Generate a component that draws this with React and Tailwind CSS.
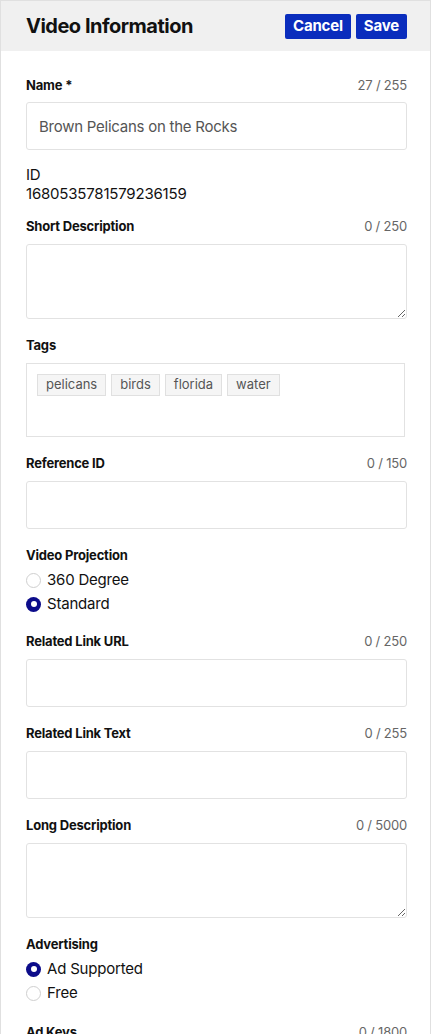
import React from 'react';

const font = { fontFamily: 'Inter, "Liberation Sans", sans-serif' };

const FieldLabel = ({ label, count }) => (
    <div className="flex items-center justify-between h-4">
        <span className="text-[13px] font-bold text-[#111] leading-4 tracking-[-0.2px]">{label}</span>
        {count && <span className="text-[13px] text-[#666] leading-4 tracking-[-0.2px]">{count}</span>}
    </div>
);

const TextField = ({ label, count, value, className = 'mt-[18px]', gap = 'mt-[10px]' }) => (
    <div className={className}>
        <FieldLabel label={label} count={count} />
        <input
            readOnly
            value={value || ''}
            className={`${gap} block w-full h-12 border border-[#e2e2e2] rounded-[3px] px-3 text-[15px] text-[#555] tracking-[-0.25px] outline-none`}
        />
    </div>
);

const TextArea = ({ label, count, className = 'mt-[18px]' }) => (
    <div className={className}>
        <FieldLabel label={label} count={count} />
        <textarea className="mt-[10px] block w-full h-[75px] border border-[#e2e2e2] rounded-[3px] px-3 outline-none" />
    </div>
);

const Radio = ({ label, checked }) => (
    <div className="flex items-center h-6">
        {checked ? (
            <span className="w-[15px] h-[15px] rounded-full bg-[#0c0c8a] flex items-center justify-center">
                <span className="w-[6px] h-[6px] rounded-full bg-white" />
            </span>
        ) : (
            <span className="w-[15px] h-[15px] rounded-full border border-[#cfcfcf] bg-white" />
        )}
        <span className="ml-[6px] text-[15px] text-[#111] tracking-[-0.2px]">{label}</span>
    </div>
);

const RadioGroup = ({ label, options }) => (
    <div className="mt-[18px]">
        <FieldLabel label={label} />
        <div className="mt-[5px]">
            {options.map(o => <Radio key={o.label} {...o} />)}
        </div>
    </div>
);

const tags = ['pelicans', 'birds', 'florida', 'water'];

export default function App() {
    return (
        <div style={font} className="w-[431px] min-h-[1034px] bg-white border-x border-t border-[#e0e0e0]">
            <div className="h-[50px] bg-[#f0f0f0] flex items-center justify-between pl-[25px] pr-[23px]">
                <h1 className="text-[20px] font-bold text-[#111] tracking-[-0.5px]">Video Information</h1>
                <div className="flex gap-[5px]">
                    <button className="h-[25px] px-[8px] bg-[#0a2dbd] text-white text-[15px] font-bold rounded-[2px] tracking-[-0.2px]">Cancel</button>
                    <button className="h-[25px] px-[8px] bg-[#0a2dbd] text-white text-[15px] font-bold rounded-[2px] tracking-[-0.2px]">Save</button>
                </div>
            </div>

            <div className="pl-[25px] pr-[23px] pt-[26px] pb-6">
                <TextField label="Name *" count="27 / 255" value="Brown Pelicans on the Rocks" className="" gap="mt-[9px]" />

                <div className="mt-[15px] text-[15px] leading-[19px] text-[#111] tracking-[-0.2px]">
                    <div>ID</div>
                    <div>1680535781579236159</div>
                </div>

                <TextArea label="Short Description" count="0 / 250" className="mt-[15px]" />

                <div className="mt-[18px]">
                    <FieldLabel label="Tags" />
                    <div className="mt-[10px] mr-[2px] h-[74px] border border-[#e2e2e2] px-[10px] pt-[10px] flex items-start gap-[5px]">
                        {tags.map(t => (
                            <span key={t} className="h-[22px] px-2 flex items-center bg-[#f5f5f5] border border-[#e0e0e0] text-[13px] text-[#555]">{t}</span>
                        ))}
                    </div>
                </div>

                <TextField label="Reference ID" count="0 / 150" />

                <RadioGroup label="Video Projection" options={[{ label: '360 Degree' }, { label: 'Standard', checked: true }]} />

                <TextField label="Related Link URL" count="0 / 250" className="mt-[17px]" />
                <TextField label="Related Link Text" count="0 / 255" />
                <TextArea label="Long Description" count="0 / 5000" />

                <RadioGroup label="Advertising" options={[{ label: 'Ad Supported', checked: true }, { label: 'Free' }]} />

                <TextField label="Ad Keys" count="0 / 1800" className="mt-[19px]" />
            </div>
        </div>
    );
}
